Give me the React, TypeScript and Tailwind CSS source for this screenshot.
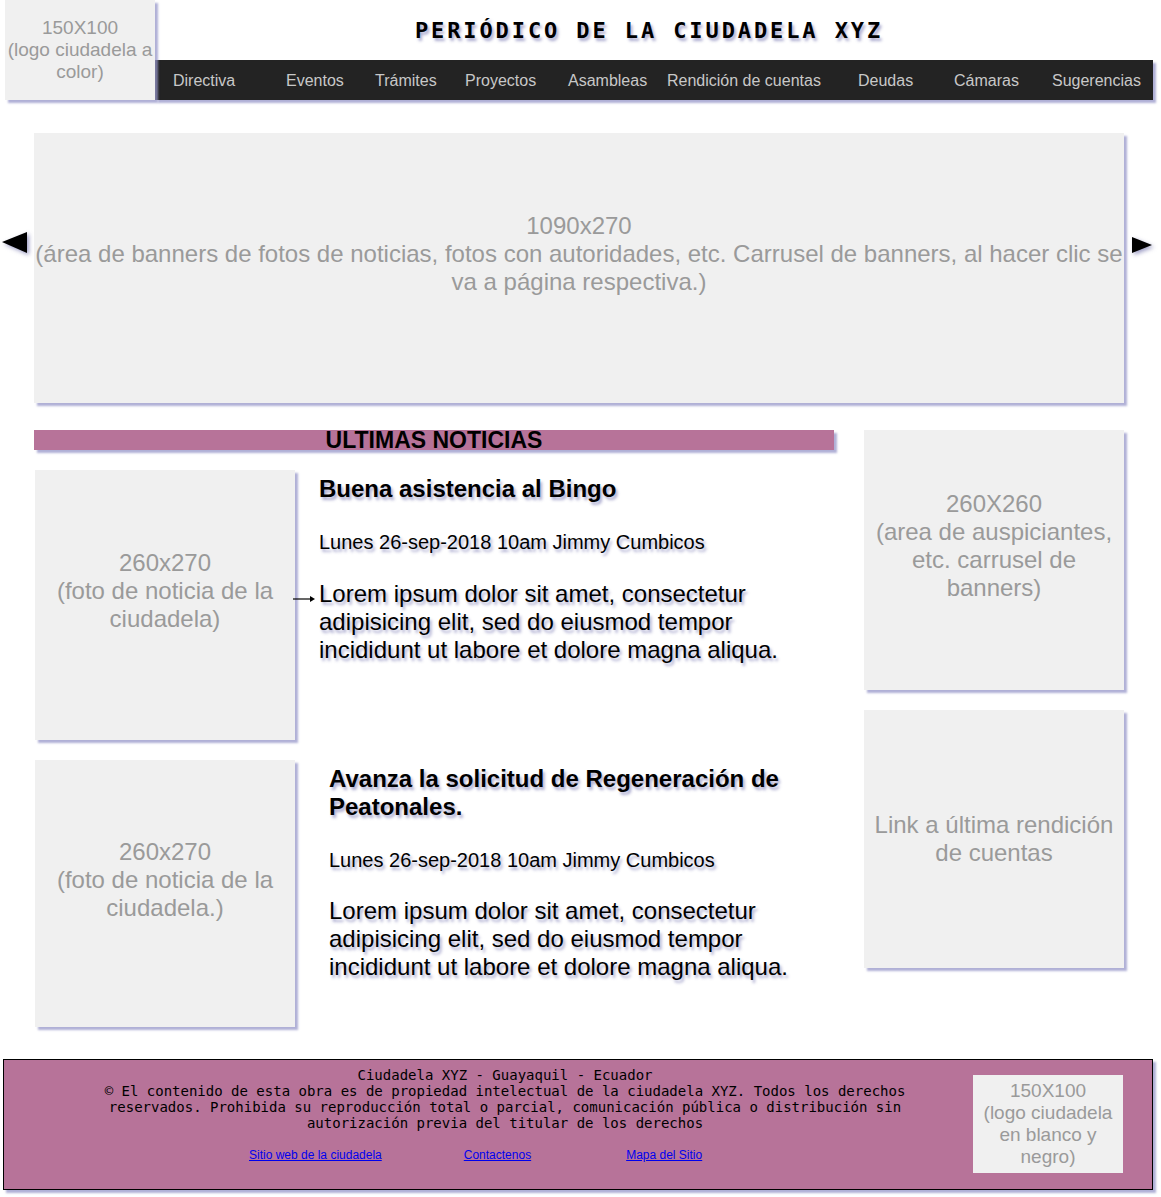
import React from 'react';

const sans = "font-['Liberation_Sans',Arial,sans-serif]";
const mono = "font-['DejaVu_Sans_Mono','Liberation_Mono',monospace]";
const boxShadow = 'shadow-[3px_3px_2px_rgba(150,150,200,0.75)]';
const textShadow = '[text-shadow:2px_3px_3px_rgba(70,70,150,0.45)]';

const navItems = [
    { label: 'Directiva', w: 'w-[113px]' },
    { label: 'Eventos', w: 'w-[89px]' },
    { label: 'Trámites', w: 'w-[90px]' },
    { label: 'Proyectos', w: 'w-[103px]' },
    { label: 'Asambleas', w: 'w-[99px]' },
    { label: 'Rendición de cuentas', w: 'w-[191px]' },
    { label: 'Deudas', w: 'w-[96px]' },
    { label: 'Cámaras', w: 'w-[98px]' },
    { label: 'Sugerencias', w: 'w-[100px]' },
];

function Placeholder({ className, children }: { className: string; children: React.ReactNode }) {
    return (
        <div className={`bg-[#f0f0f0] ${boxShadow} flex items-center justify-center text-center text-[#9a9a9a] ${className}`}>
            <div>{children}</div>
        </div>
    );
}

function Lorem() {
    return (
        <p className={`text-[24px] leading-[28px] text-black whitespace-nowrap ${textShadow}`}>
            Lorem ipsum dolor sit amet, consectetur
            <br />
            adipisicing elit, sed do eiusmod tempor
            <br />
            incididunt ut labore et dolore magna aliqua.
        </p>
    );
}

export default function App() {
    return (
        <div className={`w-[1161px] min-h-[1197px] bg-white ${sans}`}>
            {/* Header */}
            <div className="flex">
                <Placeholder className="ml-[5px] w-[150px] h-[100px] text-[19px] leading-[22px] whitespace-nowrap relative z-10">
                    150X100
                    <br />
                    (logo ciudadela a
                    <br />
                    color)
                </Placeholder>
                <div className="flex flex-col w-[998px]">
                    <div className="h-[60px] pt-[1px] pr-[10px] flex items-center justify-center">
                        <h1 className={`${mono} font-bold text-[22px] tracking-[2.9px] text-black whitespace-nowrap ${textShadow}`}>
                            PERIÓDICO DE LA CIUDADELA XYZ
                        </h1>
                    </div>
                    <nav className={`h-[40px] bg-[#232323] flex items-center pl-[18px] pt-[1px] ${boxShadow}`}>
                        {navItems.map((item) => (
                            <a key={item.label} className={`${item.w} shrink-0 whitespace-nowrap text-[16px] text-[#c8c8c8]`}>
                                {item.label}
                            </a>
                        ))}
                    </nav>
                </div>
            </div>

            {/* Banner carousel */}
            <div className="mt-[33px] flex items-start">
                <div className="w-[34px] shrink-0 pt-[99px] pl-[2px]">
                    <svg width="26" height="22" viewBox="0 0 26 22" className="[filter:drop-shadow(2px_2px_2px_rgba(60,60,140,0.5))]">
                        <polygon points="0,10 25,0 25,21" fill="#000" />
                    </svg>
                </div>
                <Placeholder className="w-[1090px] h-[270px] pb-[28px] text-[24px] leading-[28px] shrink-0">
                    1090x270
                    <br />
                    <span className="whitespace-nowrap">(área de banners de fotos de noticias, fotos con autoridades, etc. Carrusel de banners, al hacer clic se</span>
                    <br />
                    va a página respectiva.)
                </Placeholder>
                <div className="ml-[8px] pt-[104px]">
                    <svg width="22" height="18" viewBox="0 0 22 18" className="[filter:drop-shadow(2px_2px_2px_rgba(60,60,140,0.5))]">
                        <polygon points="0,0 20,8 0,16" fill="#000" />
                    </svg>
                </div>
            </div>

            {/* Main */}
            <div className="mt-[27px] flex pl-[34px]">
                <div className="w-[800px]">
                    <div className={`h-[20px] bg-[#b77399] ${boxShadow} flex items-center justify-center`}>
                        <h2 className="text-[23px] leading-[20px] font-bold text-black">ULTIMAS NOTICIAS</h2>
                    </div>

                    <div className="mt-[20px] flex">
                        <Placeholder className="ml-[1px] w-[260px] h-[270px] pb-[28px] text-[24px] leading-[28px] shrink-0">
                            260x270
                            <br />
                            (foto de noticia de la
                            <br />
                            ciudadela)
                        </Placeholder>
                        <div className="relative ml-[24px] pt-[5px]">
                            <h3 className={`text-[24px] leading-[28px] font-bold text-black ${textShadow}`}>Buena asistencia al Bingo</h3>
                            <p className={`mt-[27px] text-[20px] leading-[24px] text-black ${textShadow}`}>Lunes 26-sep-2018 10am Jimmy Cumbicos</p>
                            <div className="mt-[26px]">
                                <Lorem />
                            </div>
                            <svg width="24" height="8" viewBox="0 0 24 8" className="absolute left-[-26px] top-[125px]">
                                <line x1="0" y1="4" x2="20" y2="4" stroke="#000" strokeWidth="1.2" />
                                <polygon points="17,1 22,4 17,7" fill="#000" />
                            </svg>
                        </div>
                    </div>

                    <div className="mt-[20px] flex">
                        <Placeholder className="ml-[1px] w-[260px] h-[267px] pb-[28px] text-[24px] leading-[28px] shrink-0">
                            260x270
                            <br />
                            (foto de noticia de la
                            <br />
                            ciudadela.)
                        </Placeholder>
                        <div className="ml-[34px] pt-[5px]">
                            <h3 className={`text-[24px] leading-[28px] font-bold text-black whitespace-nowrap ${textShadow}`}>
                                Avanza la solicitud de Regeneración de
                                <br />
                                Peatonales.
                            </h3>
                            <p className={`mt-[27px] text-[20px] leading-[24px] text-black ${textShadow}`}>Lunes 26-sep-2018 10am Jimmy Cumbicos</p>
                            <div className="mt-[25px]">
                                <Lorem />
                            </div>
                        </div>
                    </div>
                </div>

                <div className="ml-[30px] w-[260px]">
                    <Placeholder className="h-[260px] pb-[28px] text-[24px] leading-[28px] whitespace-nowrap">
                        260X260
                        <br />
                        (area de auspiciantes,
                        <br />
                        etc. carrusel de
                        <br />
                        banners)
                    </Placeholder>
                    <Placeholder className="mt-[20px] h-[258px] text-[24px] leading-[28px] whitespace-nowrap">
                        Link a última rendición
                        <br />
                        de cuentas
                    </Placeholder>
                </div>
            </div>

            {/* Footer */}
            <footer className={`mt-[32px] ml-[3px] w-[1150px] h-[131px] border border-black bg-[#b77399] ${boxShadow} flex`}>
                <div className="w-[962px] pl-[40px] pt-[7px] text-center">
                    <p className={`${mono} text-[14px] leading-[16px] text-black whitespace-nowrap`}>
                        Ciudadela XYZ - Guayaquil - Ecuador
                        <br />
                        © El contenido de esta obra es de propiedad intelectual de la ciudadela XYZ. Todos los derechos
                        <br />
                        reservados. Prohibida su reproducción total o parcial, comunicación pública o distribución sin
                        <br />
                        autorización previa del titular de los derechos
                    </p>
                    <div className="mt-[16px] flex text-[12px] leading-[16px] pl-[205px]">
                        <a href="#" className="text-[#0000ee] underline">Sitio web de la ciudadela</a>
                        <a href="#" className="ml-[82px] text-[#0000ee] underline">Contactenos</a>
                        <a href="#" className="ml-[95px] text-[#0000ee] underline">Mapa del Sitio</a>
                    </div>
                </div>
                <div className="ml-[7px] mt-[15px] w-[150px] h-[98px] bg-[#f0f0f0] flex items-center justify-center text-center text-[19px] leading-[22px] text-[#9a9a9a]">
                    <div>
                        150X100
                        <br />
                        (logo ciudadela
                        <br />
                        en blanco y
                        <br />
                        negro)
                    </div>
                </div>
            </footer>
        </div>
    );
}
